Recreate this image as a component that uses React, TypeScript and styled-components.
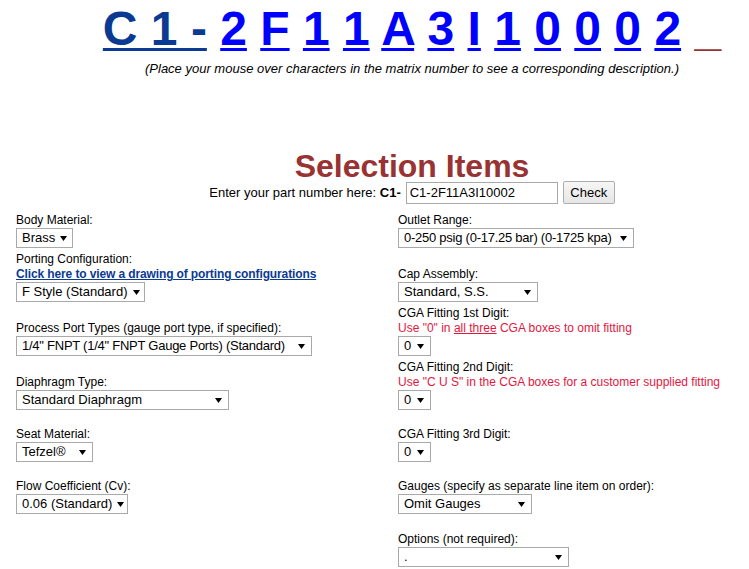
import React from "react";
import styled, { createGlobalStyle } from "styled-components";

const GlobalStyle = createGlobalStyle`
  body {
    margin: 8px;
    background: #ffffff;
    color: #000000;
    font-family: "Liberation Sans", Arial, sans-serif;
  }
`;

const Top = styled.div`
  padding-left: 75px;
  text-align: center;
`;

const MatrixLine = styled.div`
  font: bold 48px/41px "Liberation Sans", Arial, sans-serif;
  white-space: nowrap;
`;

const MatrixLink = styled.a<{ $tone: "base" | "char" | "end" }>`
  color: ${(p) => (p.$tone === "base" ? "#0b3a92" : p.$tone === "end" ? "#993333" : "#0000ff")};
  text-decoration: ${(p) => (p.$tone === "end" ? "none" : "underline")};
  text-decoration-thickness: 3px;
  text-underline-offset: 3px;
  cursor: pointer;
`;

const Subtitle = styled.div`
  margin-top: 12px;
  font: italic 13px/15px "Liberation Sans", Arial, sans-serif;
`;

const Title = styled.h1`
  margin: 75px 0 0;
  font: bold 32px/30px "Liberation Sans", Arial, sans-serif;
  color: #993333;
`;

const PartRow = styled.div`
  display: flex;
  justify-content: center;
  align-items: center;
  height: 23px;
  font: 13px "Liberation Sans", Arial, sans-serif;
  white-space: pre;
`;

const PartInput = styled.div`
  box-sizing: border-box;
  width: 152px;
  height: 22px;
  margin-left: 5px;
  padding: 0 3px;
  border: 1px solid #a9a9a9;
  display: flex;
  align-items: center;
  font-size: 13px;
`;

const CheckButton = styled.button`
  box-sizing: border-box;
  width: 52px;
  height: 23px;
  margin-left: 5px;
  padding: 0;
  border: 1px solid #adadad;
  border-radius: 2px;
  background: linear-gradient(#f6f6f6, #e6e6e6);
  font: 13px "Liberation Sans", Arial, sans-serif;
  color: #000;
`;

const FormGrid = styled.div`
  display: grid;
  grid-template-columns: 382px 1fr;
  grid-template-rows: 44px 54px 54px 54px 52px 52px 53px;
  padding-left: 8px;
`;

const Field = styled.div<{ $col?: number }>`
  display: flex;
  flex-direction: column;
  justify-content: flex-end;
  align-items: flex-start;
  grid-column: ${(p) => (p.$col ? p.$col : "auto")};
`;

const Label = styled.div`
  font: 12px/15px "Liberation Sans", Arial, sans-serif;
  white-space: nowrap;
`;

const Note = styled(Label)`
  color: #e3173e;
`;

const Underlined = styled.span`
  text-decoration: underline;
`;

const DrawingLink = styled.a`
  font: bold 12px/15px "Liberation Sans", Arial, sans-serif;
  letter-spacing: -0.12px;
  color: #0b3a92;
  text-decoration: underline;
  white-space: nowrap;
  cursor: pointer;
`;

const Select = styled.div<{ $w: number }>`
  box-sizing: border-box;
  width: ${(p) => p.$w}px;
  height: 20px;
  border: 1px solid #a9a9a9;
  background: #ffffff;
  display: flex;
  align-items: center;
  justify-content: space-between;
  padding: 0 6px 0 5px;
  font: 13px/18px "Liberation Sans", Arial, sans-serif;
  white-space: nowrap;
`;

const SelectText = styled.span<{ $tight?: boolean }>`
  letter-spacing: ${(p) => (p.$tight ? "-0.25px" : "0")};
`;

const ArrowIcon = styled.svg`
  flex: none;
  margin-left: 5px;
`;

const Arrow = () => (
  <ArrowIcon width="7" height="5" viewBox="0 0 7 5" aria-hidden="true">
    <polygon points="0,0 7,0 3.5,5" fill="#000" />
  </ArrowIcon>
);

const Dropdown = ({ w, value, tight }: { w: number; value: string; tight?: boolean }) => (
  <Select $w={w} role="combobox">
    <SelectText $tight={tight}>{value}</SelectText>
    <Arrow />
  </Select>
);

const chars = ["2", "F", "1", "1", "A", "3", "I", "1", "0", "0", "0", "2"];

export default function App() {
  return (
    <>
      <GlobalStyle />
      <Top>
        <MatrixLine>
          <MatrixLink $tone="base">C 1 -</MatrixLink>
          {chars.map((c, i) => (
            <React.Fragment key={i}>
              {" "}
              <MatrixLink $tone="char">{c}</MatrixLink>
            </React.Fragment>
          ))}{" "}
          <MatrixLink $tone="end">_</MatrixLink>
        </MatrixLine>
        <Subtitle>
          (Place your mouse over characters in the matrix number to see a corresponding description.)
        </Subtitle>
        <Title>Selection Items</Title>
        <PartRow>
          Enter your part number here: <b>C1-</b>
          <PartInput>C1-2F11A3I10002</PartInput>
          <CheckButton>Check</CheckButton>
        </PartRow>
      </Top>
      <FormGrid>
        <Field>
          <Label>Body Material:</Label>
          <Dropdown w={57} value="Brass" />
        </Field>
        <Field>
          <Label>Outlet Range:</Label>
          <Dropdown w={236} value="0-250 psig (0-17.25 bar) (0-1725 kpa)" tight />
        </Field>

        <Field>
          <Label>Porting Configuration:</Label>
          <DrawingLink>Click here to view a drawing of porting configurations</DrawingLink>
          <Dropdown w={129} value="F Style (Standard)" />
        </Field>
        <Field>
          <Label>Cap Assembly:</Label>
          <Dropdown w={140} value="Standard, S.S." />
        </Field>

        <Field>
          <Label>Process Port Types (gauge port type, if specified):</Label>
          <Dropdown w={296} value={'1/4" FNPT (1/4" FNPT Gauge Ports) (Standard)'} tight />
        </Field>
        <Field>
          <Label>CGA Fitting 1st Digit:</Label>
          <Note>
            Use "0" in <Underlined>all three</Underlined> CGA boxes to omit fitting
          </Note>
          <Dropdown w={33} value="0" />
        </Field>

        <Field>
          <Label>Diaphragm Type:</Label>
          <Dropdown w={213} value="Standard Diaphragm" />
        </Field>
        <Field>
          <Label>CGA Fitting 2nd Digit:</Label>
          <Note>Use "C U S" in the CGA boxes for a customer supplied fitting</Note>
          <Dropdown w={33} value="0" />
        </Field>

        <Field>
          <Label>Seat Material:</Label>
          <Dropdown w={77} value="Tefzel®" />
        </Field>
        <Field>
          <Label>CGA Fitting 3rd Digit:</Label>
          <Dropdown w={33} value="0" />
        </Field>

        <Field>
          <Label>Flow Coefficient (Cv):</Label>
          <Dropdown w={112} value="0.06 (Standard)" />
        </Field>
        <Field>
          <Label>Gauges (specify as separate line item on order):</Label>
          <Dropdown w={134} value="Omit Gauges" />
        </Field>

        <Field $col={2}>
          <Label>Options (not required):</Label>
          <Dropdown w={171} value="." />
        </Field>
      </FormGrid>
    </>
  );
}
